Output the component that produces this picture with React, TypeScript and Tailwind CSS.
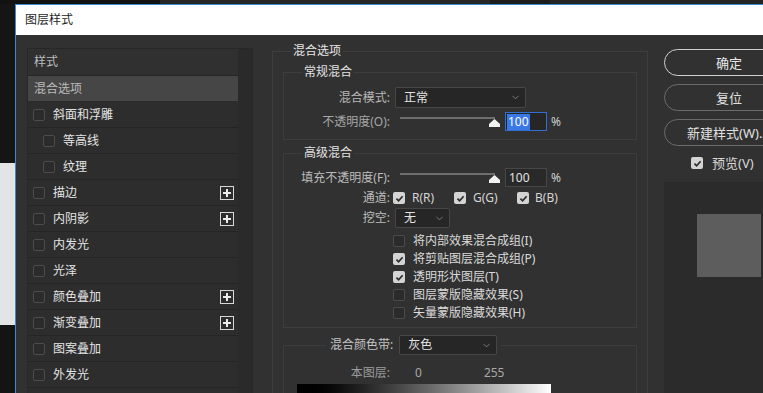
import React from "react";
import { ChevronDown } from "lucide-react";

function Box({ checked }: { checked?: boolean }) {
  return checked ? (
    <span className="flex h-[12px] w-[12px] shrink-0 items-center justify-center rounded-[2px] bg-[#d4d4d4]">
      <svg width="9" height="9" viewBox="0 0 10 10">
        <path d="M1.6 5.1 L4 7.5 L8.5 2.5" fill="none" stroke="#2c2c2c" strokeWidth="1.9" />
      </svg>
    </span>
  ) : (
    <span className="block h-[12px] w-[12px] shrink-0 rounded-[2px] border border-[#4c4c4c] bg-[#2b2b2b]" />
  );
}

function Plus() {
  return (
    <span className="flex h-[14px] w-[14px] shrink-0 items-center justify-center border border-[#d8d8d8]">
      <svg width="10" height="10" viewBox="0 0 10 10">
        <path d="M5 1 V9 M1 5 H9" stroke="#ececec" strokeWidth="2" />
      </svg>
    </span>
  );
}

function Select({ w, text }: { w: string; text: string }) {
  return (
    <div
      className={`flex h-full ${w} items-center justify-between rounded-[2px] border border-[#474747] bg-[#262626] pl-[8px] pr-[4px] text-[#e4e4e4]`}
    >
      <span>{text}</span>
      <ChevronDown size={11} color="#9c9c9c" strokeWidth={1.5} />
    </div>
  );
}

function Slider() {
  return (
    <div className="relative ml-[10px] h-[19px] w-[100px] shrink-0">
      <div className="absolute left-0 top-[5px] h-[2px] w-[95px] bg-[#6e6e6e]" />
      <svg className="absolute left-[89px] top-[7px]" width="11" height="8" viewBox="0 0 11 8">
        <polygon points="5.5,0 11,5 11,8 0,8 0,5" fill="#f2f2f2" />
      </svg>
    </div>
  );
}

const rows: { t: string; indent?: boolean; plus?: boolean }[] = [
  { t: "斜面和浮雕" },
  { t: "等高线", indent: true },
  { t: "纹理", indent: true },
  { t: "描边", plus: true },
  { t: "内阴影", plus: true },
  { t: "内发光" },
  { t: "光泽" },
  { t: "颜色叠加", plus: true },
  { t: "渐变叠加", plus: true },
  { t: "图案叠加" },
  { t: "外发光" },
  { t: "投影", plus: true },
];

const opts: { t: string; c: boolean }[] = [
  { t: "将内部效果混合成组(I)", c: false },
  { t: "将剪贴图层混合成组(P)", c: true },
  { t: "透明形状图层(T)", c: true },
  { t: "图层蒙版隐藏效果(S)", c: false },
  { t: "矢量蒙版隐藏效果(H)", c: false },
];

export default function App() {
  return (
    <div className="flex h-[393px] w-[763px] flex-col overflow-hidden bg-[#1b1b1b] font-['Noto_Sans','Noto_Sans_CJK_SC',sans-serif] text-[12px] leading-[16px]">
      <div className="flex h-[4px] shrink-0">
        <div className="w-[160px] bg-[#121212]" />
        <div className="w-[330px] bg-[#262626]" />
        <div className="w-[60px] bg-[#1c1c1c]" />
        <div className="flex-1 bg-[#242424]" />
      </div>
      <div className="flex min-h-0 flex-1">
        <div className="flex w-[15px] shrink-0 flex-col">
          <div className="h-[159px] bg-[#151515]" />
          <div className="h-[162px] bg-[#e3e4e6]" />
          <div className="flex-1 bg-[#141414]" />
        </div>
        <div className="flex min-w-0 flex-1 flex-col border-l border-t border-[#3a8ad4]">
          <div className="flex h-[30px] shrink-0 items-center bg-white pl-[9px] text-[#1e1e1e]">图层样式</div>
          <div className="flex min-h-0 flex-1 items-start overflow-hidden bg-[#313131] pl-[11px] pt-[8px]">
            {/* Left styles panel */}
            <div className="mt-[5px] flex h-[360px] w-[226px] shrink-0 border border-[#272727] bg-[#2b2b2b]">
              <div className="flex w-[210px] flex-col bg-[#2d2d2d]">
                <div className="flex h-[27px] shrink-0 items-center border-b border-[#262626] bg-[#303030] pl-[6px] text-[#bdbdbd]">
                  样式
                </div>
                <div className="flex h-[26px] shrink-0 items-center border-b border-[#2a2a2a] bg-[#464646] pl-[6px] text-[#bcbcbc]">
                  混合选项
                </div>
                {rows.map((r) => (
                  <div
                    key={r.t}
                    className={`flex h-[26px] shrink-0 items-center border-b border-[#252525] pr-[4px] text-[#e4e4e4] ${
                      r.indent ? "pl-[15px]" : "pl-[5px]"
                    }`}
                  >
                    <Box />
                    <span className="ml-[8px] flex-1">{r.t}</span>
                    {r.plus && <Plus />}
                  </div>
                ))}
              </div>
              <div className="flex-1 bg-[#2a2a2a]" />
            </div>

            {/* Middle options */}
            <fieldset className="ml-[19px] w-[376px] shrink-0 border border-[#3d3d3d] px-[10px] pb-[40px]">
              <legend className="ml-[8px] px-[2px] leading-[16px] text-[#e6e6e6]">混合选项</legend>

              <fieldset className="mt-[5px] border border-[#3d3d3d] pb-[8px] pt-[7px]">
                <legend className="ml-[18px] px-[2px] leading-[16px] text-[#e2e2e2]">常规混合</legend>
                <div className="flex h-[21px] items-center">
                  <span className="w-[106px] text-right text-[#b8b8b8]">混合模式:</span>
                  <div className="ml-[5px] h-[21px]">
                    <Select w="w-[131px]" text="正常" />
                  </div>
                </div>
                <div className="mt-[4px] flex h-[19px] items-center">
                  <span className="w-[106px] text-right text-[#a6a6a6]">不透明度(O):</span>
                  <Slider />
                  <div className="ml-[5px] flex h-[19px] w-[42px] items-center border border-[#2f6fcf] bg-[#262626] pl-[1px]">
                    <span className="bg-[#3a78e6] px-[1px] text-white">100</span>
                  </div>
                  <span className="ml-[4px] text-[#cfcfcf]">%</span>
                </div>
              </fieldset>

              <fieldset className="mt-[5px] border border-[#3d3d3d] pb-[5px] pt-[7px]">
                <legend className="ml-[18px] px-[2px] leading-[16px] text-[#e2e2e2]">高级混合</legend>
                <div className="flex h-[19px] items-center">
                  <span className="w-[106px] text-right text-[#bcbcbc]">填充不透明度(F):</span>
                  <Slider />
                  <div className="ml-[5px] flex h-[19px] w-[42px] items-center border border-[#474747] bg-[#292929] pl-[3px] text-[#e2e2e2]">
                    100
                  </div>
                  <span className="ml-[4px] text-[#cfcfcf]">%</span>
                </div>
                <div className="mt-[2px] flex h-[18px] items-center">
                  <span className="w-[106px] text-right text-[#bcbcbc]">通道:</span>
                  <div className="ml-[3px] flex w-[61px] items-center">
                    <Box checked />
                    <span className="ml-[7px] text-[#d4d4d4]">R(R)</span>
                  </div>
                  <div className="flex w-[63px] items-center">
                    <Box checked />
                    <span className="ml-[7px] text-[#d4d4d4]">G(G)</span>
                  </div>
                  <div className="flex items-center">
                    <Box checked />
                    <span className="ml-[6px] text-[#d4d4d4]">B(B)</span>
                  </div>
                </div>
                <div className="mt-[1px] flex h-[20px] items-center">
                  <span className="w-[106px] text-right text-[#bcbcbc]">挖空:</span>
                  <div className="ml-[5px] h-[20px]">
                    <Select w="w-[55px]" text="无" />
                  </div>
                </div>
                <div className="mt-[4px] flex flex-col pl-[109px]">
                  {opts.map((o) => (
                    <div key={o.t} className="flex h-[18px] items-center">
                      <Box checked={o.c} />
                      <span className="ml-[8px] text-[#dadada]">{o.t}</span>
                    </div>
                  ))}
                </div>
              </fieldset>

              <fieldset className="mt-[7px] border border-[#3d3d3d] pb-[20px]">
                <legend className="ml-[42px] flex h-[20px] items-center px-[4px]">
                  <span className="text-[#c4c4c4]">混合颜色带:</span>
                  <div className="ml-[6px] h-[20px]">
                    <Select w="w-[98px]" text="灰色" />
                  </div>
                </legend>
                <div className="mt-[10px] flex h-[16px] items-center">
                  <span className="w-[106px] text-right text-[#9c9c9c]">本图层:</span>
                  <span className="ml-[25px] text-[#a8a8a8]">0</span>
                  <span className="ml-[62px] text-[#a8a8a8]">255</span>
                </div>
                <div className="ml-[13px] mt-[3px] h-[14px] w-[254px] bg-gradient-to-r from-black to-white" />
              </fieldset>
            </fieldset>

            {/* Right column */}
            <div className="ml-[16px] mt-[6px] flex w-[130px] shrink-0 flex-col">
              <div className="flex h-[27px] items-center justify-center rounded-full border border-[#d0d0d0] text-[13px] text-[#e8e8e8]">
                确定
              </div>
              <div className="mt-[8px] flex h-[27px] items-center justify-center rounded-full border border-[#6c6c6c] text-[13px] text-[#e0e0e0]">
                复位
              </div>
              <div className="mt-[8px] flex h-[27px] items-center rounded-full border border-[#6c6c6c] pl-[22px] text-[13px] text-[#e0e0e0]">
                新建样式(W)...
              </div>
              <div className="mt-[10px] flex h-[14px] items-center pl-[27px]">
                <Box checked />
                <span className="ml-[9px] text-[13px] text-[#d8d8d8]">预览(V)</span>
              </div>
              <div className="mt-[12px] h-[220px] border border-[#2a2a2a] bg-[#2b2b2b] pl-[32px] pt-[31px]">
                <div className="h-[63px] w-[64px] bg-[#5d5d5d]" />
              </div>
            </div>
          </div>
        </div>
      </div>
    </div>
  );
}
